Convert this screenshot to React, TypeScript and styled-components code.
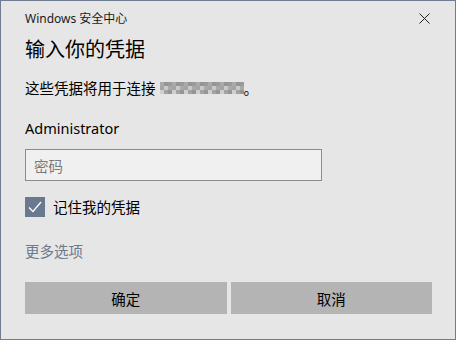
import React from "react";
import styled, { createGlobalStyle } from "styled-components";

const GlobalStyle = createGlobalStyle`
  html, body {
    margin: 0;
    padding: 0;
    background: #e6e6e6;
  }
  body {
    font-family: "Noto Sans", "Noto Sans CJK SC", sans-serif;
  }
`;

const Dialog = styled.div`
  width: 456px;
  height: 340px;
  box-sizing: border-box;
  border: 1px solid #6e7d90;
  background: #e6e6e6;
  display: flex;
  flex-direction: column;
  padding: 0 24px;
  color: #000;
`;

const TitleBar = styled.div`
  display: flex;
  align-items: center;
  justify-content: space-between;
  height: 34px;
  font-size: 12px;
  color: #1a1a1a;
`;

const CloseButton = styled.button`
  border: none;
  background: transparent;
  padding: 0;
  margin-right: -8px;
  width: 30px;
  height: 30px;
  display: flex;
  align-items: center;
  justify-content: center;
`;

const Heading = styled.div`
  font-size: 20px;
  line-height: 28px;
  font-family: "Noto Sans CJK SC", sans-serif;
`;

const Line = styled.div<{ $top: number; $color?: string }>`
  margin-top: ${(p) => p.$top}px;
  font-size: 14.5px;
  line-height: 20px;
  color: ${(p) => p.$color || "#000"};
  display: flex;
  align-items: center;
`;

const Mosaic = styled.svg`
  margin-left: 4px;
  display: block;
`;

const PasswordBox = styled.div`
  margin-top: 11px;
  width: 297px;
  height: 32px;
  box-sizing: border-box;
  border: 1px solid #8c8c8c;
  background: #f0f0f0;
  padding-left: 8px;
  display: flex;
  align-items: center;
  font-size: 14.5px;
  color: #7a7a7a;
  font-family: "Noto Sans CJK SC", sans-serif;
`;

const CheckRow = styled.label`
  margin-top: 15px;
  display: flex;
  align-items: center;
  gap: 8px;
  font-size: 14.5px;
  font-family: "Noto Sans CJK SC", sans-serif;
`;

const CheckBox = styled.span`
  width: 20px;
  height: 20px;
  background: #6a798d;
  display: flex;
  align-items: center;
  justify-content: center;
`;

const Buttons = styled.div`
  margin-top: 21px;
  display: grid;
  grid-template-columns: 1fr 1fr;
  gap: 4px;
  margin-right: -1px;
`;

const Button = styled.button`
  height: 32px;
  border: none;
  background: #b4b4b4;
  font-family: "Noto Sans CJK SC", sans-serif;
  font-size: 14.5px;
  color: #000;
  padding: 0;
`;

const mosaicGrays = [
  "#a9a9a9", "#c8c8c8", "#9c9c9c", "#b9b9b9", "#d2d2d2", "#a4a4a4", "#bebebe",
  "#959595", "#c4c4c4", "#aeaeae", "#cfcfcf", "#a0a0a0", "#b6b6b6", "#c9c9c9",
  "#9a9a9a", "#bdbdbd", "#a7a7a7", "#d0d0d0", "#b0b0b0", "#a2a2a2", "#c6c6c6",
];

function IpMosaic() {
  const cols = 21;
  const rows = 3;
  const cells: React.ReactNode[] = [];
  for (let r = 0; r < rows; r++) {
    for (let c = 0; c < cols; c++) {
      const fill = mosaicGrays[(c * 7 + r * 5 + (c % 3) * r) % mosaicGrays.length];
      cells.push(<rect key={`${r}-${c}`} x={c * 4} y={r * 4} width={4} height={4} fill={fill} />);
    }
  }
  return (
    <Mosaic width="84" height="12" viewBox="0 0 84 12">
      {cells}
    </Mosaic>
  );
}

export default function App() {
  return (
    <>
      <GlobalStyle />
      <Dialog>
        <TitleBar>
          <span>Windows 安全中心</span>
          <CloseButton aria-label="关闭">
            <svg width="11" height="11" viewBox="0 0 11 11">
              <path d="M0.5 0.5 L10.5 10.5 M10.5 0.5 L0.5 10.5" stroke="#222" strokeWidth="1" />
            </svg>
          </CloseButton>
        </TitleBar>
        <Heading>输入你的凭据</Heading>
        <Line $top={15}>
          这些凭据将用于连接
          <IpMosaic />
          <span>。</span>
        </Line>
        <Line $top={20}>Administrator</Line>
        <PasswordBox>密码</PasswordBox>
        <CheckRow>
          <CheckBox>
            <svg width="14" height="12" viewBox="0 0 14 12">
              <path d="M1 6.5 L5 10.5 L13 1" fill="none" stroke="#fff" strokeWidth="1.3" />
            </svg>
          </CheckBox>
          记住我的凭据
        </CheckRow>
        <Line $top={24} $color="#6c7a8e">更多选项</Line>
        <Buttons>
          <Button>确定</Button>
          <Button>取消</Button>
        </Buttons>
      </Dialog>
    </>
  );
}
